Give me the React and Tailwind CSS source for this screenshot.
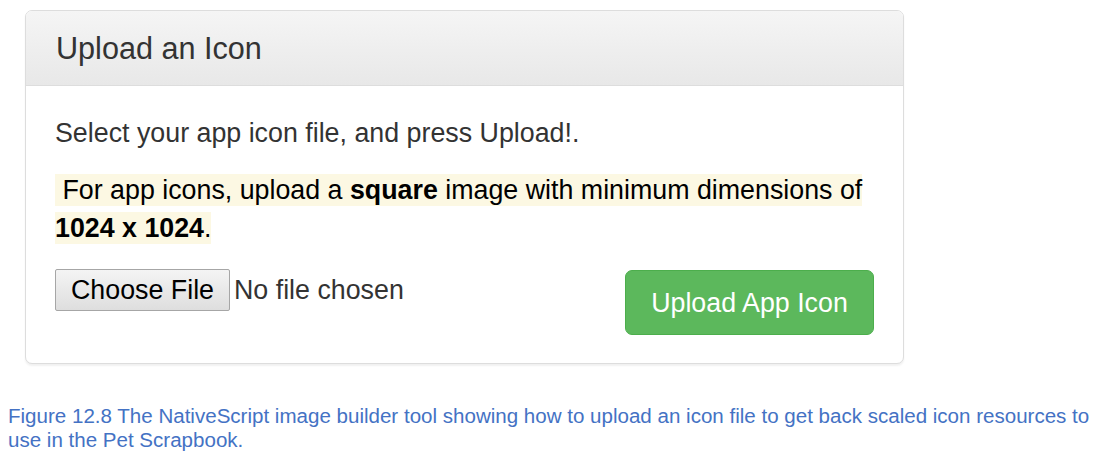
export default function App() {
  return (
    <div className="w-[1097px] h-[462px] bg-white overflow-hidden" style={{ fontFamily: '"Liberation Sans", Arial, sans-serif' }}>
      <div className="pt-[10px] pl-[25px]">
        <div className="w-[879px] border border-[#dddddd] rounded-[7px] shadow-[0_2px_2px_rgba(0,0,0,0.06)] bg-white">
          <div className="h-[75px] rounded-t-[6px] border-b border-[#dddddd] bg-gradient-to-b from-[#f5f5f5] to-[#e8e8e8] flex items-center pl-[30px]">
            <h3 className="text-[30.6px] leading-[34px] text-[#333333] font-normal">Upload an Icon</h3>
          </div>
          <div className="px-[29px] pt-[28px] pb-[28px] text-[#333333] text-[26.8px] leading-[38px]">
            <p className="mb-[19px]">Select your app icon file, and press Upload!.</p>
            <p className="mb-[19px]">
              <mark className="bg-[#fcf8e3] text-black py-[1px]">
                {'\u00a0'}For app icons, upload a <b>square</b> image with minimum dimensions of <b>1024 x 1024</b>.
              </mark>
            </p>
            <div className="flex items-start justify-between">
              <div className="flex items-center mt-[3px]">
                <button className="h-[42px] px-[15px] border border-[#a6a6a6] rounded-[2px] bg-gradient-to-b from-[#f4f4f4] to-[#dedede] text-black text-[26.8px] leading-[30px]">
                  Choose File
                </button>
                <span className="ml-[4px] text-[#333333]">No file chosen</span>
              </div>
              <button className="mt-[4px] w-[249px] h-[65px] rounded-[7px] bg-[#5cb85c] border border-[#4cae4c] text-white text-[26.8px] leading-[30px]">
                Upload App Icon
              </button>
            </div>
          </div>
        </div>
      </div>
      <div className="pl-[8px] pt-[40px] text-[20.55px] leading-[24px] text-[#4472c4]">
        Figure 12.8 The NativeScript image builder tool showing how to upload an icon file to get back scaled icon resources to use in the Pet Scrapbook.
      </div>
    </div>
  );
}
